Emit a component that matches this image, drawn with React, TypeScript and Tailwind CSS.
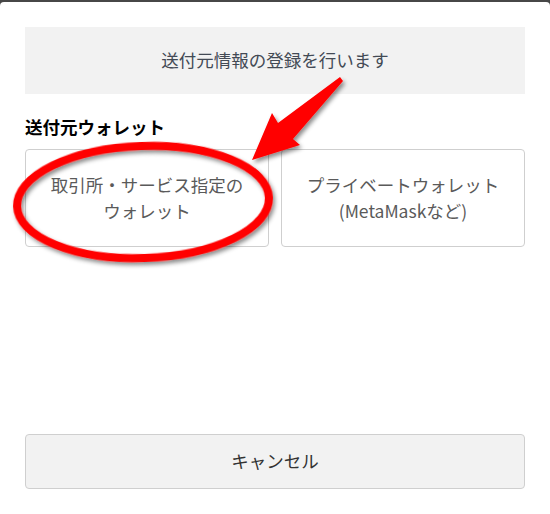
import React from "react"

const jp = { fontFamily: '"Noto Sans CJK JP", "Noto Sans", sans-serif' }

function Annotation() {
  return (
    <svg
      className="pointer-events-none absolute left-0 top-0"
      width={550}
      height={514}
      viewBox="0 0 550 514"
    >
      <defs>
        <filter id="sh" x="-20%" y="-20%" width="140%" height="140%">
          <feDropShadow dx="2" dy="3" stdDeviation="2" floodColor="#000" floodOpacity="0.45" />
        </filter>
      </defs>
      <ellipse
        cx={143}
        cy={200}
        rx={126}
        ry={56}
        fill="none"
        stroke="#ff0000"
        strokeWidth={8}
        transform="rotate(-2 143 200)"
        filter="url(#sh)"
      />
      <polygon
        points="340,75 278,121 272,111 252,158 300,143 293,137 343,79"
        fill="#ff0000"
        filter="url(#sh)"
      />
    </svg>
  )
}

export default function App() {
  return (
    <div className="h-[514px] w-[550px] overflow-hidden bg-[#474747] pt-[2px]" style={jp}>
      <div className="relative flex h-[520px] flex-col rounded-[4px] bg-white px-[25px] pt-[25px]">
        <div className="flex h-[67px] items-center justify-center bg-[#f2f2f2] text-[17.5px] text-[#434a55]">
          送付元情報の登録を行います
        </div>

        <div className="mt-[20px] text-[17.5px] font-bold leading-[26px] text-black">送付元ウォレット</div>

        <div className="mt-[9px] grid grid-cols-2 gap-[12px]">
          <button className="flex h-[98px] flex-col items-center justify-center rounded-[4px] border border-[#cfcfcf] bg-white text-[17.5px] leading-[26px] text-[#5a5a5a]">
            <span>取引所・サービス指定の</span>
            <span>ウォレット</span>
          </button>
          <button className="flex h-[98px] flex-col items-center justify-center rounded-[4px] border border-[#cfcfcf] bg-white text-[17.5px] leading-[26px] text-[#5a5a5a]">
            <span>プライベートウォレット</span>
            <span>(MetaMaskなど)</span>
          </button>
        </div>

        <button className="mt-[187px] flex h-[55px] items-center justify-center rounded-[4px] border border-[#cfcfcf] bg-[#f2f2f2] text-[17.5px] text-[#333]">
          キャンセル
        </button>

        <Annotation />
      </div>
    </div>
  )
}
